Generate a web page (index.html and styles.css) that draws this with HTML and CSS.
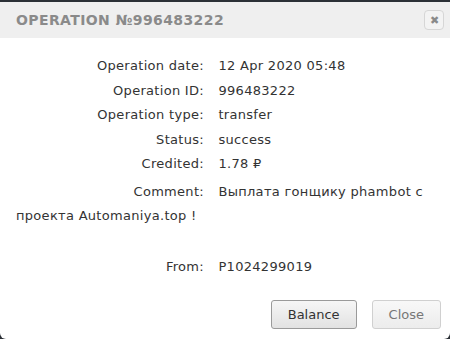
FILE: index.html
```html
<!DOCTYPE html>
<html>
<head>
    <title>Operation</title>
    <link rel="stylesheet" href="styles.css">
</head>
<body>
    <div class="dialog">
        <!-- Title bar -->
        <div class="dialog-header">
            <span class="dialog-title">Operation №996483222</span>
            <button class="close-x" title="Close">&#10006;</button>
        </div>

        <div class="dialog-body">
            <div class="row"><span class="label">Operation date:</span> 12 Apr 2020 05:48</div>
            <div class="row"><span class="label">Operation ID:</span> 996483222</div>
            <div class="row"><span class="label">Operation type:</span> transfer</div>
            <div class="row"><span class="label">Status:</span> success</div>
            <div class="row"><span class="label">Credited:</span> 1.78 &#8381;</div>
            <div class="row comment"><span class="label">Comment:</span> Выплата гонщику phambot с проекта Automaniya.top !</div>
            <div class="row empty"></div>
            <div class="row"><span class="label">From:</span> P1024299019</div>
        </div>

        <div class="dialog-footer">
            <button class="btn btn-main">Balance</button>
            <button class="btn btn-light">Close</button>
        </div>
    </div>
</body>
</html>
```

FILE: styles.css
```css
body {
    margin: 0;
    background-color: #2b3036;
    font-family: "DejaVu Sans", sans-serif;
}
.dialog {
    margin-top: 2px;
    height: 337px;
    background-color: #fff;
    border-radius: 0 0 6px 6px;
    overflow: hidden;
    display: flex;
    flex-direction: column;
}
.dialog-header {
    height: 36px;
    background-color: #efefef;
    display: flex;
    align-items: center;
    justify-content: space-between;
    padding: 0 6px 0 16px;
}
.dialog-title {
    font-size: 14px;
    font-weight: bold;
    letter-spacing: 0.4px;
    text-transform: uppercase;
    color: #8a8a8a;
}
.close-x {
    width: 20px;
    height: 20px;
    padding: 0;
    border: 1px solid #d6d6d6;
    border-radius: 4px;
    background-color: #f3f3f3;
    color: #8a8a8a;
    font-size: 11px;
    line-height: 18px;
}
.dialog-body {
    flex: 1;
    padding: 16px 16px 0;
    font-size: 13px;
    letter-spacing: 0.3px;
    color: #333;
}
.row {
    line-height: 24.5px;
}
.comment {
    margin-top: 3px;
}
.label {
    display: inline-block;
    width: 188px;
    text-align: right;
    margin-right: 10px;
}
.empty {
    height: 26px;
}
.dialog-footer {
    display: flex;
    justify-content: flex-end;
    gap: 15px;
    padding: 0 9px 10px;
}
.btn {
    font-family: "DejaVu Sans", sans-serif;
    font-size: 13px;
    height: 29px;
    padding: 0 16px;
    border-radius: 3px;
    background: linear-gradient(#f6f6f6, #e2e2e2);
}
.btn-main {
    border: 1px solid #9a9a9a;
    color: #333;
}
.btn-light {
    border: 1px solid #d0d0d0;
    color: #777;
    background: linear-gradient(#f8f8f8, #ececec);
}
```
